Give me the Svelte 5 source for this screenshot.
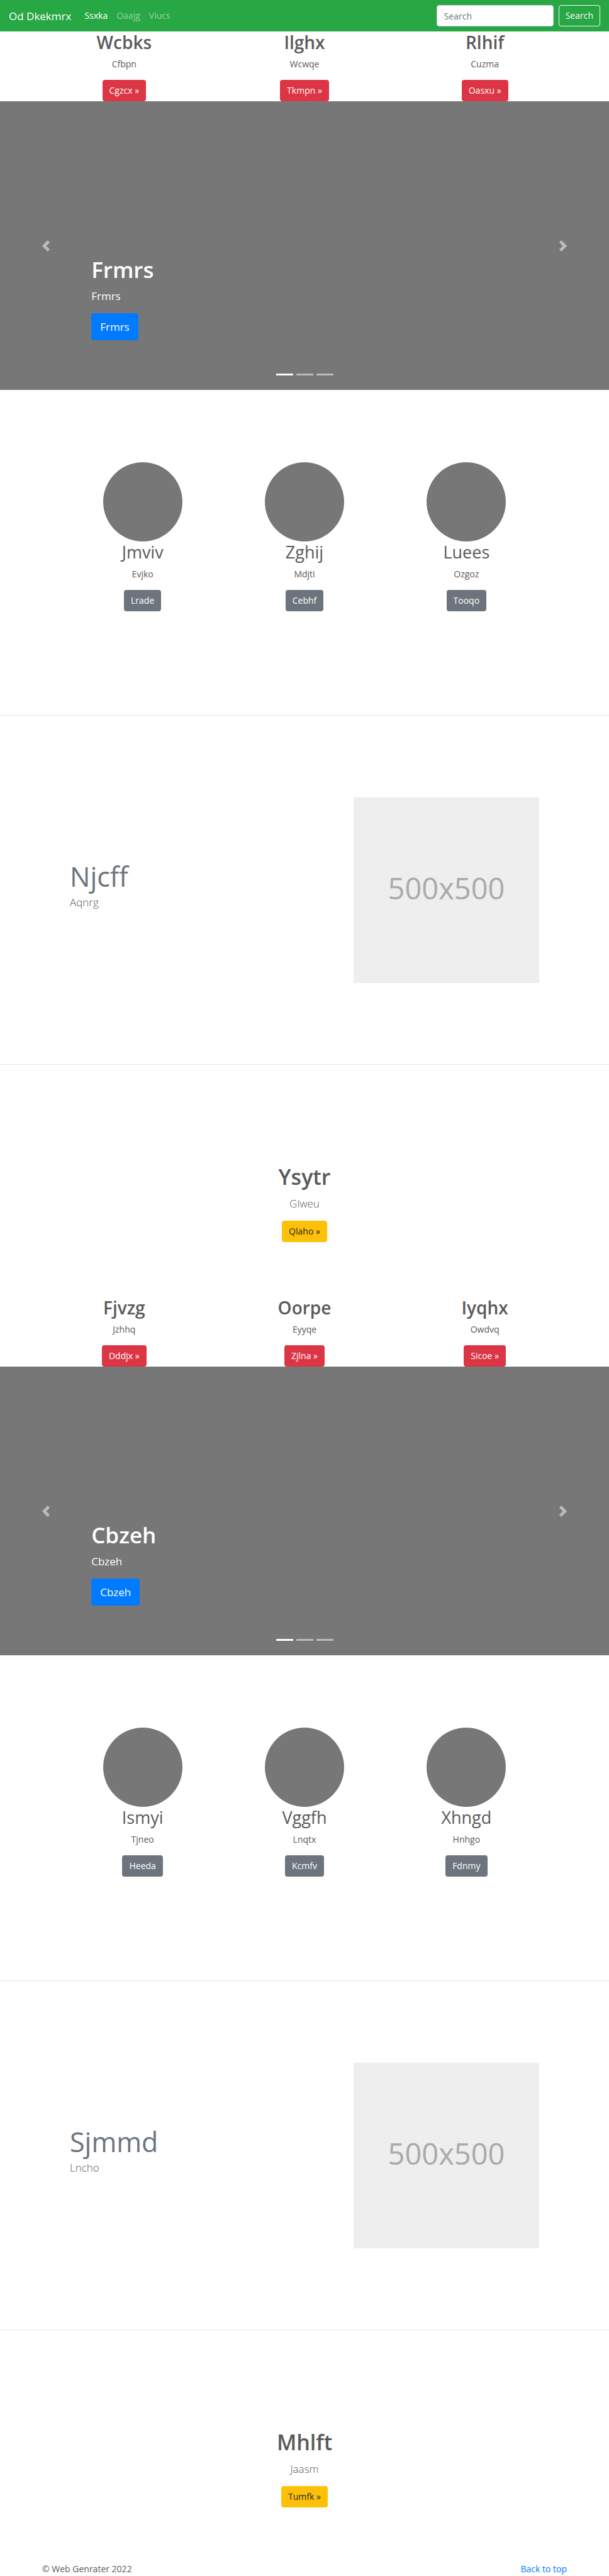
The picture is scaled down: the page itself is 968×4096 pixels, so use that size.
<script>
  const navLinks = ['Ssxka', 'Oaajg', 'Viucs'];

  const groups = [
    {
      services: [
        { title: 'Wcbks', text: 'Cfbpn', action: 'Cgzcx' },
        { title: 'Ilghx', text: 'Wcwqe', action: 'Tkmpn' },
        { title: 'Rlhif', text: 'Cuzma', action: 'Oasxu' },
      ],
      slide: 'Frmrs',
      people: [
        { title: 'Jmviv', text: 'Evjko', action: 'Lrade' },
        { title: 'Zghij', text: 'Mdjti', action: 'Cebhf' },
        { title: 'Luees', text: 'Ozgoz', action: 'Tooqo' },
      ],
      feature: { title: 'Njcff', text: 'Aqnrg' },
      closing: { title: 'Ysytr', text: 'Glweu', action: 'Qlaho' },
    },
    {
      services: [
        { title: 'Fjvzg', text: 'Jzhhq', action: 'Dddjx' },
        { title: 'Oorpe', text: 'Eyyqe', action: 'Zjlna' },
        { title: 'Iyqhx', text: 'Owdvq', action: 'Sicoe' },
      ],
      slide: 'Cbzeh',
      people: [
        { title: 'Ismyi', text: 'Tjneo', action: 'Heeda' },
        { title: 'Vggfh', text: 'Lnqtx', action: 'Kcmfv' },
        { title: 'Xhngd', text: 'Hnhgo', action: 'Fdnmy' },
      ],
      feature: { title: 'Sjmmd', text: 'Lncho' },
      closing: { title: 'Mhlft', text: 'Jaasm', action: 'Tumfk' },
    },
  ];
</script>

<header class="navbar" id="top">
  <a class="brand" href="#top">Od Dkekmrx</a>
  <nav>
    {#each navLinks as link, i}
      <a class:active={i === 0} href="#top">{link}</a>
    {/each}
  </nav>
  <form class="search" onsubmit={(e) => e.preventDefault()}>
    <input type="search" placeholder="Search" aria-label="Search" />
    <button type="submit">Search</button>
  </form>
</header>

<main>
  {#each groups as group}
    <section class="services">
      {#each group.services as item}
        <div class="item">
          <h2>{item.title}</h2>
          <p>{item.text}</p>
          <a class="btn danger" href="#top">{item.action} »</a>
        </div>
      {/each}
    </section>

    <section class="carousel">
      <button class="control prev" aria-label="Previous">
        <svg viewBox="0 0 8 8" aria-hidden="true"><path d="M5.25 0l-4 4 4 4 1.5-1.5L4.25 4l2.5-2.5L5.25 0z" /></svg>
      </button>
      <div class="caption">
        <h1>{group.slide}</h1>
        <p>{group.slide}</p>
        <a class="btn primary" href="#top">{group.slide}</a>
      </div>
      <button class="control next" aria-label="Next">
        <svg viewBox="0 0 8 8" aria-hidden="true"><path d="M2.75 0l-1.5 1.5L3.75 4l-2.5 2.5L2.75 8l4-4-4-4z" /></svg>
      </button>
      <div class="indicators"><span class="current"></span><span></span><span></span></div>
    </section>

    <section class="people">
      {#each group.people as item}
        <div class="item">
          <div class="avatar"></div>
          <h2>{item.title}</h2>
          <p>{item.text}</p>
          <a class="btn secondary" href="#top">{item.action}</a>
        </div>
      {/each}
    </section>

    <hr />

    <section class="feature">
      <div class="copy">
        <h2>{group.feature.title}</h2>
        <p>{group.feature.text}</p>
      </div>
      <div class="placeholder">500x500</div>
    </section>

    <hr />

    <section class="closing item">
      <h2>{group.closing.title}</h2>
      <p>{group.closing.text}</p>
      <a class="btn warning" href="#top">{group.closing.action} »</a>
    </section>
  {/each}
</main>

<footer>
  <span>© Web Genrater 2022</span>
  <a href="#top">Back to top</a>
</footer>

<style>
  :global(body) {
    background: #fff;
    color: #5a5a5a;
    font: 400 14px/22px 'Open Sans', 'Noto Sans', sans-serif;
  }

  :global(*) {
    box-sizing: border-box;
  }

  h1,
  h2,
  p {
    margin: 0;
  }

  a {
    color: #007bff;
    text-decoration: none;
  }

  .navbar {
    display: flex;
    align-items: center;
    height: 50px;
    padding: 0 14px;
    background: #28a745;
  }

  .brand {
    margin-right: 21px;
    color: #fff;
    font-size: 17px;
    line-height: 27px;
  }

  nav {
    display: flex;
    gap: 14px;
    flex: 1;
  }

  nav a {
    color: rgba(255, 255, 255, 0.5);
  }

  nav a.active {
    color: #fff;
  }

  .search {
    display: flex;
    gap: 8px;
  }

  .search input,
  .search button {
    height: 34px;
    border-radius: 4px;
    font: inherit;
  }

  .search input {
    width: 186px;
    padding: 0 11px;
    border: 1px solid #ced4da;
    background: #fff;
    color: #495057;
  }

  .search input::placeholder {
    color: #6c757d;
    opacity: 1;
  }

  .search button {
    padding: 0 10px;
    border: 1px solid #f8f9fa;
    background: transparent;
    color: #f8f9fa;
  }

  .item {
    display: flex;
    flex-direction: column;
    align-items: center;
    text-align: center;
  }

  .item h2 {
    margin-bottom: 7px;
    font-size: 27px;
    line-height: 34px;
    font-weight: 400;
  }

  .item p {
    margin-bottom: 14px;
  }

  .btn {
    display: inline-block;
    padding: 6px 11px;
    border-radius: 4px;
    color: #fff;
    line-height: 22px;
  }

  .danger {
    background: #dc3545;
  }

  .primary {
    background: #007bff;
  }

  .secondary {
    background: #6c757d;
  }

  .warning {
    background: #ffc107;
    color: #212529;
  }

  .services {
    display: grid;
    grid-template-columns: repeat(3, 1fr);
    padding: 0 54px;
  }

  .services h2 {
    font-size: 28px;
    font-weight: 600;
  }

  .carousel {
    position: relative;
    display: grid;
    grid-template-columns: 15% 1fr 15%;
    height: 459px;
    background: #777;
    color: #fff;
  }

  .control {
    display: flex;
    align-items: center;
    justify-content: center;
    padding: 0;
    border: 0;
    background: none;
    opacity: 0.5;
  }

  .control svg {
    width: 18px;
    height: 18px;
    fill: #fff;
  }

  .caption {
    align-self: end;
    padding-bottom: 79px;
    font-size: 17px;
  }

  .caption h1 {
    margin-bottom: 7px;
    font-size: 35px;
    line-height: 43px;
    font-weight: 600;
  }

  .caption p {
    margin-bottom: 14px;
    line-height: 27px;
  }

  .caption .btn {
    padding: 8px 14px;
    line-height: 27px;
    vertical-align: top;
  }

  .indicators {
    position: absolute;
    right: 0;
    bottom: 23px;
    left: 0;
    display: flex;
    justify-content: center;
    gap: 5px;
  }

  .indicators span {
    width: 27px;
    height: 3px;
    background: rgba(255, 255, 255, 0.5);
  }

  .indicators .current {
    background: #fff;
  }

  .people {
    display: grid;
    grid-template-columns: repeat(3, 1fr);
    padding: 115px 98px 165px;
  }

  .avatar {
    width: 126px;
    height: 126px;
    border-radius: 50%;
    background: #777;
  }

  hr {
    height: 1px;
    margin: 0;
    border: 0;
    background: #e5e5e5;
  }

  .feature {
    display: flex;
    align-items: center;
    justify-content: space-between;
    padding: 130px 111px 129px;
  }

  .feature h2 {
    color: #6c757d;
    font-size: 43px;
    line-height: 54px;
    font-weight: 400;
  }

  .feature p,
  .closing p {
    font-size: 17px;
    line-height: 27px;
    font-weight: 300;
  }

  .feature p {
    margin-bottom: 16px;
  }

  .placeholder {
    display: flex;
    align-items: center;
    justify-content: center;
    width: 295px;
    height: 295px;
    padding-bottom: 8px;
    background: #eee;
    color: #aaa;
    font-size: 47px;
    line-height: 60px;
  }

  .closing {
    padding: 157px 0 87px;
  }

  .closing h2 {
    font-size: 34px;
    line-height: 43px;
    font-weight: 600;
  }

  footer {
    display: flex;
    justify-content: space-between;
    padding: 0 67px;
  }
</style>
